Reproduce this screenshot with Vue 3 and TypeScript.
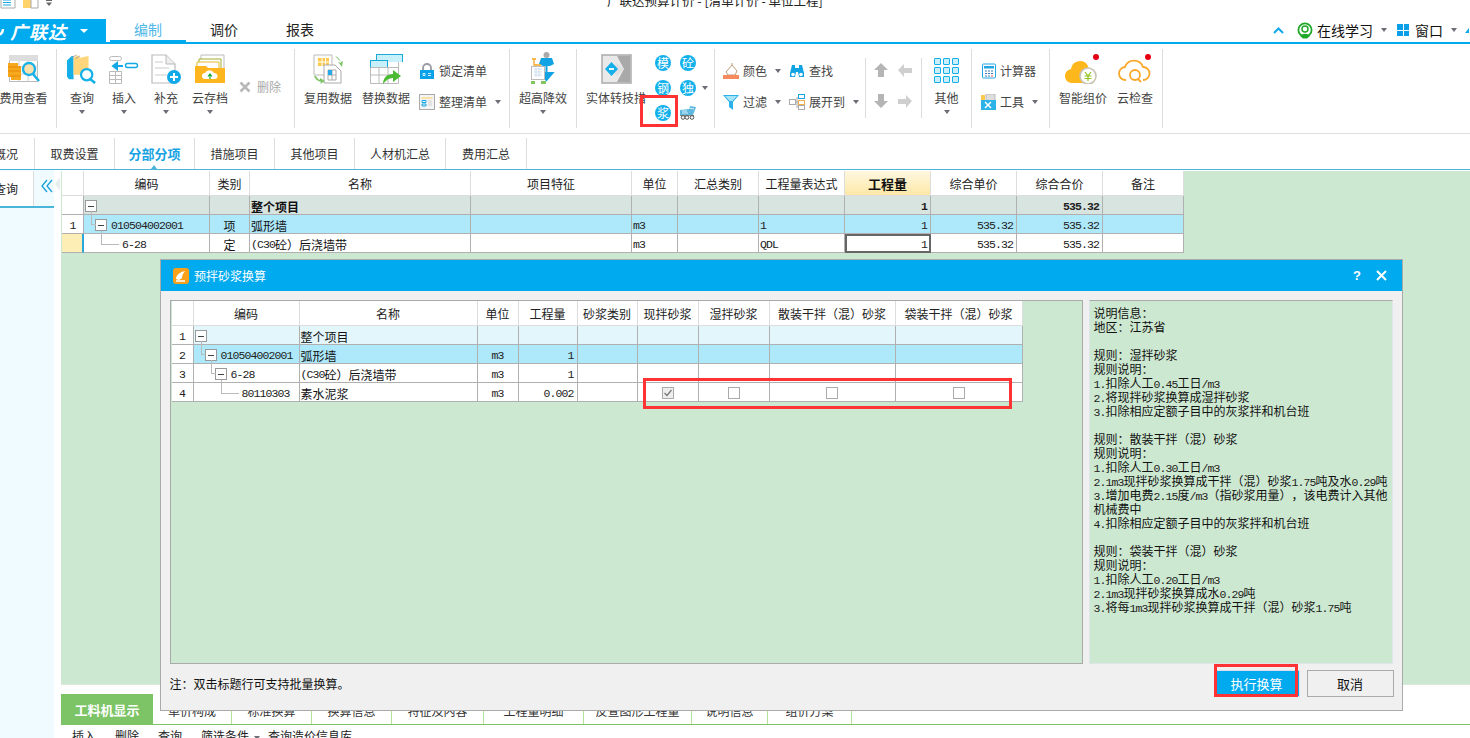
<script setup lang="ts">
interface Seg { x: string; l: boolean }
function segs(t: string): Seg[] {
  return t.split(/([\x20-\x7e]+)/).filter(Boolean).map((x) => ({ x, l: /^[\x20-\x7e]/.test(x) }))
}
const navTabs = [
  { t: '概况', w: 35, cls: 'first' },
  { t: '取费设置', w: 80 },
  { t: '分部分项', w: 80, cls: 'on' },
  { t: '措施项目', w: 80 },
  { t: '其他项目', w: 80 },
  { t: '人材机汇总', w: 91 },
  { t: '费用汇总', w: 81 },
]
const mainHead = ['', '编码', '类别', '名称', '项目特征', '单位', '汇总类别', '工程量表达式', '工程量', '综合单价', '综合合价', '备注']
const mainRows = [
  { n: '', cls: 'total', lv: 0, box: true, code: '', type: '', name: '整个项目', unit: '', expr: '', qty: '1', price: '', sum: '535.32' },
  { n: '1', cls: 'sel', lv: 1, box: true, code: '010504002001', type: '项', name: '弧形墙', unit: 'm3', expr: '1', qty: '1', price: '535.32', sum: '535.32' },
  { n: '', cls: 'cur', lv: 2, box: false, code: '6-28', type: '定', name: '(C30砼）后浇墙带', unit: 'm3', expr: 'QDL', qty: '1', price: '535.32', sum: '535.32' },
]
const dlgHead = ['', '编码', '名称', '单位', '工程量', '砂浆类别', '现拌砂浆', '湿拌砂浆', '散装干拌（混）砂浆', '袋装干拌（混）砂浆']
const dlgRows = [
  { n: '1', cls: 'pale', lv: 0, box: true, code: '', name: '整个项目', unit: '', qty: '', checks: false },
  { n: '2', cls: 'sel', lv: 1, box: true, code: '010504002001', name: '弧形墙', unit: 'm3', qty: '1', checks: false },
  { n: '3', cls: '', lv: 2, box: true, code: '6-28', name: '(C30砼）后浇墙带', unit: 'm3', qty: '1', checks: false },
  { n: '4', cls: '', lv: 3, box: false, code: '80110303', name: '素水泥浆', unit: 'm3', qty: '0.002', checks: true },
]
const info = [
  '说明信息：', '地区：江苏省', '',
  '规则：湿拌砂浆', '规则说明：', '1.扣除人工0.45工日/m3', '2.将现拌砂浆换算成湿拌砂浆', '3.扣除相应定额子目中的灰浆拌和机台班', '',
  '规则：散装干拌（混）砂浆', '规则说明：', '1.扣除人工0.30工日/m3', '2.1m3现拌砂浆换算成干拌（混）砂浆1.75吨及水0.29吨',
  '3.增加电费2.15度/m3（指砂浆用量），该电费计入其他', '机械费中', '4.扣除相应定额子目中的灰浆拌和机台班', '',
  '规则：袋装干拌（混）砂浆', '规则说明：', '1.扣除人工0.20工日/m3', '2.1m3现拌砂浆换算成水0.29吨', '3.将每1m3现拌砂浆换算成干拌（混）砂浆1.75吨',
]
const bottomTabs = [
  { t: '单价构成', w: 79 }, { t: '标准换算', w: 80 }, { t: '换算信息', w: 80 }, { t: '特征及内容', w: 92 },
  { t: '工程量明细', w: 100 }, { t: '反查图形工程量', w: 108 }, { t: '说明信息', w: 76 }, { t: '组价方案', w: 84 },
]
const grid9 = [0, 1, 2, 3, 4, 5, 6, 7, 8]
</script>

<template>
  <div class="app">
    <div class="titlebar">
      <div class="qa">
        <svg width="16" height="9" viewBox="0 0 16 9"><path d="M1-6h10l4 4v10H1z" fill="#fff" stroke="#aaa"/><path d="M3 0h8M3 2.5h8M3 5h8" stroke="#1ba6e4" stroke-width="1.2"/></svg>
        <svg class="qa2" width="16" height="9" viewBox="0 0 16 9"><rect x="0" y="-5" width="8" height="13" fill="#ffd36b"/><path d="M8-5h7V8H8z" fill="#fff" stroke="#aaa"/></svg>
        <svg class="qa3" width="6" height="7" viewBox="0 0 6 7"><path d="M0 0.5h6" stroke="#666"/><path d="M0 2.5h6L3 6z" fill="#666"/></svg>
      </div>
      <div class="title">广联达预算计价 - [清单计价 - 单位工程]</div>
    </div>

    <div class="menubar">
      <div class="brand">
        <svg width="8" height="23" viewBox="0 0 8 23"><path d="M-3 16c4 0 6-3 6-6" fill="none" stroke="#fff" stroke-width="2.5"/></svg>
        <span class="brand-t">广联达</span>
        <i class="tri white"></i>
      </div>
      <div class="mtab on">编制</div>
      <div class="mtab">调价</div>
      <div class="mtab">报表</div>
      <div class="mright">
        <svg width="11" height="7" viewBox="0 0 11 7"><path d="M1 6l4.5-4.5L10 6" fill="none" stroke="#12a8ee" stroke-width="2"/></svg>
        <svg class="r1" width="16" height="17" viewBox="0 0 16 17"><circle cx="8" cy="8" r="6.6" fill="none" stroke="#22a829" stroke-width="1.8"/><circle cx="8" cy="7" r="3" fill="none" stroke="#22a829" stroke-width="1.5"/><path d="M3 14c2-3 8-3 10 0l-3 2.5H6z" fill="#22a829"/></svg>
        <span class="r2">在线学习</span>
        <i class="tri r3"></i>
        <span class="winico r4"><b></b><b></b><b></b><b></b></span>
        <span class="r5">窗口</span>
        <i class="tri r6"></i>
        <svg class="r7" width="4" height="7" viewBox="0 0 4 7"><path d="M0 6L4 1v5z" fill="#12a8ee"/></svg>
      </div>
    </div>

    <div class="ribbon">
      <div class="grp" style="width:57px">
        <div class="big" style="width:47px">
          <svg class="ic" width="32" height="30" viewBox="0 0 32 30"><rect x="1.5" y="1.5" width="28" height="26" fill="#fff" stroke="#bbb"/><rect x="1" y="1" width="29" height="6" fill="#ddd"/><path d="M1 13h29M1 20h29M11 7v21M20 7v21" stroke="#ccc"/><path d="M0 9h10v3h3v14H3v-3H0z" fill="#f8a81c"/><path d="M0 13h13M0 17h13M2 22h11" stroke="#e58a05"/><circle cx="21" cy="15" r="6" fill="#fde1ae" stroke="#19b1e8" stroke-width="2.4"/><path d="M25 20l6 7" stroke="#19b1e8" stroke-width="2.6"/></svg>
          <span class="lb">费用查看</span>
        </div>
      </div>
      <div class="grp g2" style="width:238px">
        <div class="big" style="width:42px">
          <svg class="ic" width="32" height="32" viewBox="0 0 32 32"><path d="M0 7l5-5h2v25H2l-2-3z" fill="#14aee8"/><path d="M7 4l4-3 3 3 9-2v20H7z" fill="#ffd67c"/><path d="M5 4l5-3M9 5l5-3" stroke="#aaa"/><circle cx="21" cy="22" r="6" fill="#fff" stroke="#14b1e8" stroke-width="2.4"/><path d="M25 27l5 4" stroke="#14b1e8" stroke-width="2.8"/></svg>
          <span class="lb">查询</span><i class="tri"></i>
        </div>
        <div class="big" style="width:42px">
          <svg class="ic" width="30" height="30" viewBox="0 0 30 30"><rect x="0.5" y="2.5" width="12" height="4" rx="2" fill="#fff" stroke="#bbb"/><path d="M4 12h10M4 12l4-3v6z" stroke="#13a9e6" stroke-width="2" fill="#13a9e6"/><rect x="16.5" y="9.5" width="12" height="4" rx="2" fill="#fff" stroke="#13a9e6" stroke-width="1.4"/><path d="M0.5 17.5h12v12h-12zM0.5 21.5h12M0.5 25.5h12M6.5 17.5v12" fill="none" stroke="#bbb"/></svg>
          <span class="lb">插入</span><i class="tri"></i>
        </div>
        <div class="big" style="width:42px">
          <svg class="ic" width="31" height="30" viewBox="0 0 31 30"><path d="M1 1h14l9 9v19H1z" fill="#fff" stroke="#bbb" stroke-width="1.2"/><path d="M15 1v9h9" fill="#eee" stroke="#bbb"/><path d="M4 8h8M4 14h14M4 21h12" stroke="#ddd" stroke-width="1.4"/><circle cx="23" cy="23" r="7" fill="#12a9e8"/><path d="M23 19v8M19 23h8" stroke="#fff" stroke-width="2"/></svg>
          <span class="lb">补充</span><i class="tri"></i>
        </div>
        <div class="big" style="width:46px">
          <svg class="ic" width="30" height="30" viewBox="0 0 30 30"><path d="M6 1h23v16H6z" fill="#fff" stroke="#bbb"/><path d="M4 5h22v14H4z" fill="#fff" stroke="#9fb02e"/><path d="M2 8h22v12H2z" fill="#fff" stroke="#e6b92a"/><path d="M0 12h11l2 2h17v15H0z" fill="#ffb61e"/><path d="M10 25a3 3 0 0 1 0-6 5 5 0 0 1 9 0 3 3 0 0 1 1 6z" fill="#fff"/><path d="M15 25v-4M13 22.500l2-2.500 2 2.500" fill="none" stroke="#18a938" stroke-width="1.200"/></svg>
          <span class="lb">云存档</span><i class="tri"></i>
        </div>
        <div class="del">
          <svg width="12" height="12" viewBox="0 0 12 12"><path d="M1.500 1.500l9 9M10.500 1.500l-9 9" stroke="#b9b9b9" stroke-width="2.600"/></svg>
          <span>删除</span>
        </div>
      </div>
      <div class="grp g3" style="width:215px">
        <div class="big" style="width:58px">
          <svg class="ic" width="30" height="30" viewBox="0 0 30 30"><path d="M1 1h18v20H1z" fill="#fff" stroke="#bbb"/><rect x="5" y="4" width="11" height="8" fill="#ffc94d"/><path d="M5 8h11M9 4v8M12.500 4v8" stroke="#fff"/><path d="M11 11h11l6 6v12H11z" fill="#fff" stroke="#aaa"/><path d="M15 16h8v10h-8zM15 21h8M19 16v10" fill="none" stroke="#aaa"/><rect x="15" y="16" width="4" height="5" fill="#26a9e6"/><path d="M22 2c3 1 5 3 6 7l-3-1 4 5 1-6-2 1" fill="#7fc46a"/><path d="M1 22c1 3 3 5 7 6l-1 2 5-3-5-3v2c-2-1-3-2-4-4z" fill="#7fc46a"/></svg>
          <span class="lb">复用数据</span>
        </div>
        <div class="big" style="width:58px">
          <svg class="ic" width="33" height="30" viewBox="0 0 33 30"><rect x="6.500" y="0.500" width="26" height="24" fill="#c8f0fb" stroke="#1aa9d8"/><path d="M6 8h27v21H0V7" fill="#fff"/><rect x="0.500" y="6.500" width="17" height="7" fill="#c8f0fb" stroke="#1aa9d8"/><path d="M0.500 13.500h28v16h-28zM0.500 21h28M9 13.500v16M18 13.500v16M28.500 8v6" fill="none" stroke="#bbb"/><path d="M13 30c0-6 4-10 10-10v-4l8 6-8 6v-4c-4 0-7 2-10 6z" fill="#4cbb34"/></svg>
          <span class="lb">替换数据</span>
        </div>
        <div class="col">
          <div class="small"><svg class="si" width="16" height="16" viewBox="0 0 16 16"><path d="M4 8V5a4 4 0 0 1 8 0v3" fill="none" stroke="#9a9aa6" stroke-width="1.800"/><rect x="1" y="7" width="14" height="9" fill="#0aa2e8"/><path d="M4 10.500h2v2H4zM9 10.500h3M9 12.500h3" stroke="#fff" fill="none" stroke-width=".8"/></svg><span>锁定清单</span></div>
          <div class="small"><svg class="si" width="16" height="16" viewBox="0 0 16 16"><rect x=".5" y=".5" width="15" height="15" fill="#f4f4f4" stroke="#aaa"/><rect x="2.500" y="3" width="11" height="2" fill="#f9e1a8"/><path d="M3 6.500h4v2H3zM3 10h4v2H3z" fill="none" stroke="#16a8e6"/><path d="M9 7h4M9 9h4M9 11h4" stroke="#ddd" stroke-width="1.400"/></svg><span>整理清单</span><i class="tri aft"></i></div>
        </div>
      </div>
      <div class="grp" style="width:67px">
        <div class="big" style="width:66px">
          <svg class="ic tall" width="25" height="32" viewBox="0 0 25 32"><circle cx="15.500" cy="3" r="3" fill="#aaa"/><path d="M10 6h11l2 6-4 2h-7l-4-2z" fill="#12a3e4"/><path d="M15.500 12v8M15.500 28l-6-7h12z" fill="#12a3e4" stroke="#12a3e4" stroke-width="2"/><path d="M3 7v6h7M1 7h4" fill="none" stroke="#f5a623" stroke-width="1.300"/><rect x=".5" y="14.500" width="13" height="13" fill="#fff" stroke="#bbb"/><path d="M3 17h8M3 20h8M3 23h8M5 16v9M8 16v9" stroke="#cde"/><path d="M0 29h4v3H0zM10 29h5v3h-5z" fill="#84c45c"/></svg>
          <span class="lb">超高降效</span><i class="tri"></i>
        </div>
      </div>
      <div class="grp g5" style="width:138px">
        <div class="big" style="width:60px">
          <svg class="ic" width="31" height="30" viewBox="0 0 31 30"><rect x="1" y="1" width="29" height="28" fill="#e9e9e9" stroke="#aaa" stroke-width="1.500"/><path d="M16 2h13v26H16l7-13z" fill="#a9a9a9"/><path d="M10 15l6-6 7 6-7 7z" fill="#e0e0e0"/><path d="M10.500 8l6.500 7-6.500 7L4 15z" fill="#14aee8"/><path d="M8 15h5" stroke="#fff" stroke-width="1.800"/></svg>
          <span class="lb">实体转技措</span>
        </div>
        <div class="circs">
          <span class="circ">模</span><span class="circ">砼</span><span></span>
          <span class="circ">钢</span><span class="circ">独</span><i class="tri mid"></i>
          <span class="circ">浆</span>
          <svg width="16" height="14" viewBox="0 0 16 14"><path d="M0 4l9-1 1-3 6 1-1 3-2 5H0z" fill="#5fb9de"/><path d="M2 5h5M2 7h6M9 2l5 1" stroke="#d5eef8"/><path d="M0 9.500h14" stroke="#888"/><circle cx="3" cy="11.500" r="1.800" fill="#fff" stroke="#555"/><circle cx="7" cy="11.500" r="1.800" fill="#fff" stroke="#555"/><circle cx="12" cy="11.500" r="1.800" fill="#fff" stroke="#555"/></svg>
          <span></span>
        </div>
      </div>
      <div class="grp g6" style="width:150px">
        <div class="small"><svg class="si" width="16" height="16" viewBox="0 0 16 16"><path d="M3 9l6-7 5 6-2 4H5z" fill="#fff" stroke="#bb9c7a"/><path d="M9 2V0" stroke="#bb9c7a"/><rect x="0" y="12" width="16" height="4" fill="#f68a5c"/></svg><span>颜色</span><i class="tri aft"></i></div>
        <div class="small"><svg class="si" width="16" height="16" viewBox="0 0 16 16"><path d="M3 2h3v3h4V2h3l2 8v4h-5l-1-5H7l-1 5H1v-4z" fill="#12a3e4"/><circle cx="4" cy="11.500" r="1.800" fill="#fff"/><circle cx="12" cy="11.500" r="1.800" fill="#fff"/></svg><span>查找</span></div>
        <div class="small"><svg class="si" width="16" height="16" viewBox="0 0 16 16"><path d="M0 1h16L10 8v8L6 13V8z" fill="#2bb2ea"/><path d="M2 2h12L9.500 7h-3z" fill="#a6e2f8"/></svg><span>过滤</span><i class="tri aft"></i></div>
        <div class="small"><svg class="si" width="16" height="16" viewBox="0 0 16 16"><rect x=".5" y="5.500" width="6" height="5" fill="#fff" stroke="#aaa"/><rect x="9.500" y=".5" width="6" height="4" fill="#fff" stroke="#18a6e2"/><rect x="9.500" y="6.500" width="6" height="4" fill="#fff" stroke="#f0b14a"/><rect x="9.500" y="11.500" width="6" height="4" fill="#fff" stroke="#aaa"/><path d="M7 8h2M8 3v11" stroke="#aaa"/></svg><span>展开到</span><i class="tri aft"></i></div>
      </div>
      <i class="sep"></i>
      <div class="grp g7" style="width:55px">
        <svg width="16" height="16" viewBox="0 0 16 16"><path d="M8 1l7 7h-4v7H5V8H1z" fill="#b5b5b5"/></svg>
        <svg width="16" height="16" viewBox="0 0 16 16"><path d="M1 8l6-6v4h8v5H7v4z" fill="#cfcfcf"/></svg>
        <svg width="16" height="16" viewBox="0 0 16 16"><path d="M8 15L1 8h4V1h6v7h4z" fill="#b5b5b5"/></svg>
        <svg width="16" height="16" viewBox="0 0 16 16"><path d="M15 8L9 2v4H1v5h8v4z" fill="#cfcfcf"/></svg>
      </div>
      <i class="sep"></i>
      <div class="grp" style="width:50px">
        <div class="big" style="width:49px">
          <div class="ic g9"><i v-for="k in grid9" :key="k"></i></div>
          <span class="lb">其他</span><i class="tri"></i>
        </div>
      </div>
      <div class="grp g8" style="width:78px">
        <div class="col">
          <div class="small"><svg class="si" width="15" height="16" viewBox="0 0 15 16"><rect x="1.500" y="1" width="13" height="14" rx="1" fill="#fff" stroke="#22a6e4"/><rect x="3" y="3" width="10" height="2.500" fill="#22a6e4"/><path d="M4 8h2M7 8h2M10 8h2M4 10.500h2M7 10.500h2M10 10.500h2M4 13h2M7 13h2" stroke="#3a78b8"/><path d="M10 13h2" stroke="#e55"/></svg><span>计算器</span></div>
          <div class="small"><svg class="si" width="15" height="16" viewBox="0 0 15 16"><rect x="5" y="0" width="9" height="7" fill="#ddd" stroke="#bbb"/><path d="M0 1h4v5H0z" fill="#ffc94d"/><rect x="0" y="6" width="15" height="10" fill="#2db2e8"/><path d="M4 8l6 6M10 8l-6 6" stroke="#fff" stroke-width="1.500"/></svg><span>工具</span><i class="tri aft"></i></div>
        </div>
      </div>
      <div class="grp g10" style="width:113px">
        <div class="big" style="width:48px">
          <svg class="ic" width="36" height="30" viewBox="0 0 36 30"><path d="M8 29a7 7 0 0 1-2-14 9 9 0 0 1 17-3l3 17z" fill="#ffb81c"/><circle cx="23" cy="22" r="8" fill="#fff" stroke="#c9c3b4" stroke-width="1.600"/><path d="M20 18l3 4 3-4M19.500 22h7M19.500 24.500h7M23 22v5" fill="none" stroke="#8fc31f" stroke-width="1.200"/><circle cx="31" cy="3" r="3" fill="#e60012"/></svg>
          <span class="lb">智能组价</span>
        </div>
        <div class="big" style="width:48px">
          <svg class="ic" width="36" height="30" viewBox="0 0 36 30"><path d="M9 26a6.500 6.500 0 0 1-1-13 9.500 9.500 0 0 1 18 0 6.500 6.500 0 0 1 0 13" fill="none" stroke="#f9a72b" stroke-width="1.800"/><circle cx="18" cy="21" r="5" fill="#fff" stroke="#f9a72b" stroke-width="1.800"/><path d="M21 25l3 3" stroke="#f9a72b" stroke-width="1.800"/><circle cx="31" cy="3" r="3" fill="#e60012"/></svg>
          <span class="lb">云检查</span>
        </div>
      </div>
    </div>

    <div class="nav">
      <div v-for="t in navTabs" :key="t.t" class="ntab" :class="t.cls" :style="{ width: t.w + 'px' }">{{ t.t }}</div>
      <i class="notch"></i>
    </div>

    <div class="main">
      <aside class="side">
        <div class="side-top">
          <div class="side-tab">查询</div>
          <svg width="12" height="14" viewBox="0 0 12 14"><path d="M6 1L1 7l5 6M11 1L6 7l5 6" fill="none" stroke="#1a9fd8" stroke-width="1.300"/></svg>
        </div>
        <i class="side-notch"></i>
      </aside>
      <div class="content">
        <div class="area">
          <div class="mtable">
            <div class="mrow head">
              <div v-for="(h, i) in mainHead" :key="i" class="c" :class="{ hot: h === '工程量' }">{{ h }}</div>
            </div>
            <div v-for="r in mainRows" :key="r.code" class="mrow" :class="r.cls">
              <div class="c numc mono">{{ r.n }}</div>
              <div class="c tree lft" :style="{ paddingLeft: (r.box ? 1 + r.lv * 10 : r.lv * 10 - 3) + 'px' }">
                <span v-if="r.box" class="box" :class="{ linked: r.lv > 0 }"></span>
                <span v-else class="leaf"></span>
                <span class="mono code">{{ r.code }}</span>
              </div>
              <div class="c">{{ r.type }}</div>
              <div class="c lft nm"><span v-for="(s, i) in segs(r.name)" :key="i" :class="{ lat: s.l }">{{ s.x }}</span></div>
              <div class="c"></div>
              <div class="c lft mono pad2">{{ r.unit }}</div>
              <div class="c"></div>
              <div class="c lft mono pad2">{{ r.expr }}</div>
              <div class="c rgt mono" :class="{ focus: r.cls === 'cur' }">{{ r.qty }}</div>
              <div class="c rgt mono">{{ r.price }}</div>
              <div class="c rgt mono">{{ r.sum }}</div>
              <div class="c"></div>
            </div>
          </div>
        </div>
        <div class="btabs">
          <div class="btab on">工料机显示</div>
          <div v-for="t in bottomTabs" :key="t.t" class="btab" :style="{ width: t.w + 'px' }">{{ t.t }}</div>
        </div>
        <div class="btools">
          <span>插入</span><span>删除</span><span>查询</span><span class="tight">筛选条件<i class="tri inl"></i></span><span>查询造价信息库</span>
        </div>
      </div>
    </div>

    <section class="dialog">
      <header class="dhead">
        <svg width="16" height="16" viewBox="0 0 16 16"><rect width="16" height="16" rx="3" fill="#f9a11b"/><path d="M3 11c0-4 4-7 9-8-2 2-3 5-3 7l-3 2z" fill="#fff"/><path d="M3 13h9" stroke="#fff" stroke-width="1.500"/></svg>
        <span class="dtitle">预拌砂浆换算</span>
        <span class="dq">?</span>
        <svg class="dx" width="11" height="11" viewBox="0 0 11 11"><path d="M1 1l9 9M10 1l-9 9" stroke="#fff" stroke-width="2"/></svg>
      </header>
      <div class="dbody">
        <div class="dleft">
          <div class="drow head">
            <div v-for="(h, i) in dlgHead" :key="i" class="c">{{ h }}</div>
          </div>
          <div v-for="r in dlgRows" :key="r.n" class="drow" :class="r.cls">
            <div class="c numc mono">{{ r.n }}</div>
            <div class="c tree lft" :style="{ paddingLeft: (r.box ? 1 + r.lv * 10 : r.lv * 10 - 3) + 'px' }">
              <span v-if="r.box" class="box" :class="{ linked: r.lv > 0 }"></span>
              <span v-else class="leaf"></span>
              <span class="mono code">{{ r.code }}</span>
            </div>
            <div class="c lft nm"><span v-for="(s, i) in segs(r.name)" :key="i" :class="{ lat: s.l }">{{ s.x }}</span></div>
            <div class="c mono">{{ r.unit }}</div>
            <div class="c rgt mono">{{ r.qty }}</div>
            <div class="c"></div>
            <div class="c"><span v-if="r.checks" class="cb checked"><svg width="10" height="10" viewBox="0 0 10 10"><path d="M1.500 5l2.500 2.500L8.500 2" fill="none" stroke="#777" stroke-width="1.200"/></svg></span></div>
            <div class="c"><span v-if="r.checks" class="cb"></span></div>
            <div class="c"><span v-if="r.checks" class="cb"></span></div>
            <div class="c"><span v-if="r.checks" class="cb"></span></div>
          </div>
        </div>
        <div class="dright">
          <div v-for="(l, i) in info" :key="i" class="iline"><span v-for="(s, j) in segs(l)" :key="j" :class="{ lat: s.l }">{{ s.x }}</span></div>
        </div>
      </div>
      <footer class="dfoot">
        <div class="note">注：双击标题行可支持批量换算。</div>
        <button class="btn primary">执行换算</button>
        <button class="btn">取消</button>
      </footer>
    </section>

    <i class="mark m1"></i>
    <i class="mark m2"></i>
    <i class="mark m3"></i>
  </div>
</template>

<style scoped>
.app { position: relative; width: 1470px; height: 738px; overflow: hidden; background: #fff; color: #222; font: 12px/14px "Noto Sans CJK SC", "Liberation Sans", sans-serif; text-spacing-trim: space-all; }
i { display: block; font-style: normal; }
.tri { width: 0; height: 0; flex: none; border-left: 3.5px solid transparent; border-right: 3.5px solid transparent; border-top: 4px solid #6d6d78; }
.tri.white { border-top-color: #fff; border-left-width: 4px; border-right-width: 4px; margin-left: 13px; }

.titlebar { height: 18px; display: flex; overflow: hidden; }
.qa { display: flex; align-items: flex-start; width: 52px; }
.qa2 { margin-left: 7px; }
.qa3 { margin-left: 7px; }
.title { margin: -6px 0 0 555px; font-size: 12.500px; line-height: 14px; color: #222; white-space: nowrap; }

.menubar { height: 26px; box-sizing: border-box; display: flex; border-bottom: 2px solid #00aaef; }
.brand { width: 106px; height: 23px; margin: 1px 4px 0 0; background: #00aaef; display: flex; align-items: center; color: #fff; }
.brand-t { margin-left: 2px; font-size: 18px; font-weight: 700; font-style: italic; letter-spacing: 1px; }
.mtab { width: 76px; box-sizing: border-box; height: 24px; text-align: center; font-size: 14px; line-height: 23px; color: #222; border-bottom: 2px solid transparent; }
.mtab.on { color: #4fb7e8; border-bottom-color: #00aaef; }
.mright { margin-left: auto; width: 197px; display: flex; align-items: center; font-size: 14px; color: #111; flex: none; }
.mright > * { flex: none; }
.r1 { margin-left: 13px; }
.r2 { margin-left: 4px; }
.r3 { margin-left: 8px; }
.r4 { margin-left: 10px; }
.r5 { margin-left: 6px; }
.r6 { margin-left: 8px; }
.r7 { margin-left: 8px; }
.winico { width: 12px; height: 12px; display: grid; grid-template-columns: 5.500px 5.500px; grid-template-rows: 5.500px 5.500px; gap: 1px; }
.winico b { background: #0a9fe8; }

.ribbon { height: 90px; box-sizing: border-box; padding-top: 5px; border-bottom: 1px solid #ddd; display: flex; align-items: flex-start; color: #444; }
.grp { height: 79px; box-sizing: border-box; border-right: 1px solid #ddd; display: flex; flex: none; }
.big { display: flex; flex-direction: column; align-items: center; padding-top: 5px; flex: none; }
.ic { height: 30px; flex: none; margin-bottom: 7px; }
.ic.tall { height: 32px; margin: -2px 0 7px; }
.lb { line-height: 14px; white-space: nowrap; }
.big .tri { margin-top: 5px; }
.g2 { padding-left: 4px; }
.del { display: flex; align-items: center; gap: 6px; color: #aaa; height: 14px; margin: 31px 0 0 6px; white-space: nowrap; }
.g3 { padding-left: 4px; }
.col { display: flex; flex-direction: column; gap: 15px; padding-top: 14px; }
.small { display: flex; align-items: center; height: 16px; white-space: nowrap; }
.si { margin-right: 4px; flex: none; }
.tri.aft { margin-left: 8px; }
.g3 .col { margin-left: 4px; }
.g5 { padding-left: 9px; }
.circs { margin: 6px 0 0 9px; display: grid; grid-template-columns: 16px 16px 8px; grid-auto-rows: 16px; gap: 9px 9px; align-items: center; }
.circ { width: 16px; height: 16px; border-radius: 50%; background: #14b1ea; color: #fff; font-size: 12px; line-height: 16px; text-align: center; }
.tri.mid { margin-left: -3px; }
.g6 { border: 0; padding: 14px 0 0 8px; display: grid; grid-template-columns: 66px 76px; grid-auto-rows: 16px; gap: 15px 0; }
.sep { width: 1px; height: 60px; background: #ddd; margin-top: 9px; flex: none; }
.g7 { border: 0; padding: 13px 0 0 7px; display: grid; grid-template-columns: 16px 16px; grid-auto-rows: 16px; gap: 15px 8px; }
.g9 { width: 25px; height: 24px; margin: 4px 0 9px; display: grid; grid-template-columns: repeat(3, 7px); grid-auto-rows: 7px; gap: 2px; }
.g9 i { background: #c8effb; border: 1.500px solid #14aee8; box-sizing: border-box; border-radius: 1px; }
.g8 { padding-left: 9px; }
.g10 { padding-left: 9px; gap: 4px; }

.nav { position: relative; height: 36px; box-sizing: border-box; border-bottom: 1px solid #4ab4d9; display: flex; }
.ntab { box-sizing: border-box; margin-top: 4px; border-right: 1px solid #ddd; text-align: center; line-height: 31px; flex: none; white-space: nowrap; color: #333; }
.ntab.first { text-align: right; padding-right: 16px; direction: rtl; }
.ntab.on { color: #17a3e2; font-weight: 700; font-size: 13px; }
.notch { position: absolute; left: 151px; bottom: 0; width: 0; height: 0; border-left: 3.500px solid transparent; border-right: 3.500px solid transparent; border-bottom: 4px solid #4ab4d9; }

.main { height: 568px; display: flex; }
.side { position: relative; width: 54px; flex: none; background: #f0fbff; border-right: 1px solid #fff; }
.side-top { height: 35px; margin-top: 1px; border-bottom: 2px solid #4ab4d9; display: flex; align-items: flex-start; }
.side-top svg { margin: 8px 0 0 7px; }
.side-tab { width: 34px; height: 35px; box-sizing: border-box; background: #fff; border-right: 1px solid #ddd; line-height: 36px; text-align: right; padding-right: 15px; white-space: nowrap; direction: rtl; color: #222; }
.side-notch { position: absolute; left: 55px; top: 7px; width: 0; height: 0; border-top: 7px solid transparent; border-bottom: 7px solid transparent; border-right: 5px solid #e6eeee; }
.content { margin-left: 6px; flex: 1; display: flex; flex-direction: column; min-width: 0; }
.area { flex: 1; margin: 1px 0 9px; padding-left: 1px; background: #cde8d0; border-bottom: 1px solid #dbe8dc; min-height: 0; }
.mtable { width: 1122px; }

.mrow, .drow { display: grid; }
.mrow { grid-template-columns: 22px 126px 40px 221px 161px 46px 81px 86px 86px 86px 86px 81px; height: 19px; }
.drow { grid-template-columns: 22px 106px 178px 41px 59px 60px 61px 71px 126px 127px; height: 19px; width: 851px; margin-left: 1px; background: #fff; }
.head { height: 25px; background: #fff; }
.c { box-sizing: border-box; border-right: 1px solid #b0b0b0; border-bottom: 1px solid #b0b0b0; display: flex; align-items: center; justify-content: center; white-space: nowrap; overflow: visible; background: inherit; position: relative; color: #111; min-width: 0; padding-top: 3px; }
.head .c { border-color: #dcdcdc; color: #222; padding: 1px 0 0 0; }
.mrow.total { background: #d8e4df; font-weight: 700; }
.mrow.sel, .drow.sel { background: #ade8fb; }
.mrow.cur { background: #fff; }
.drow.pale { background: #e3f6fb; }
.numc { background: #fff; }
.mrow.cur .numc { background: #fdeeb5; border-right: 2px solid #2ca7dc; }
.c.hot { background: linear-gradient(#fff8e0, #fde8a8); font-weight: 700; font-size: 13px; color: #111; }
.c.focus { outline: 2px solid #666; outline-offset: -2px; z-index: 1; }
.lft { justify-content: flex-start; }
.rgt { justify-content: flex-end; padding-right: 3px; }
.nm { padding-left: 1px; }
.pad2 { padding-left: 1px; }
.mono, .lat { font-family: "Liberation Mono", monospace; font-size: 11.500px; letter-spacing: -.900px; color: #222; }
.tree { overflow: visible; }
.box { position: relative; width: 12px; height: 12px; margin-top: -1px; box-sizing: border-box; border: 1px solid #999; background: #fff; margin-right: 4px; flex: none; }
.box::after { content: ""; position: absolute; left: 2px; right: 2px; top: 4.500px; height: 1px; background: #444; }
.box.linked::before { content: ""; position: absolute; left: -5px; top: -9px; width: 4px; height: 13px; border-left: 1px solid #bbb; border-bottom: 1px solid #bbb; }
.leaf { position: relative; width: 18px; margin-right: 3px; height: 1px; flex: none; }
.leaf::before { content: ""; position: absolute; left: 0; bottom: 0; width: 17px; height: 13px; border-left: 1px solid #bbb; border-bottom: 1px solid #bbb; }

.btabs { height: 31px; flex: none; box-sizing: border-box; border-bottom: 1px solid #7cc466; display: flex; }
.btab { box-sizing: border-box; border-right: 1px solid #b4e39a; text-align: center; line-height: 34px; flex: none; white-space: nowrap; color: #333; }
.btab.on { width: 92px; background: #7cc466; color: #fff; font-weight: 700; font-size: 13px; line-height: 32px; border: 0; }
.btools { height: 13px; overflow: hidden; display: flex; padding-left: 11px; line-height: 22px; color: #222; white-space: nowrap; }
.btools span { margin-right: 19px; display: flex; align-items: flex-start; height: 22px; }
.btools span.tight { margin-right: 8px; }
.tri.inl { margin: 11px 0 0 5px; }

.dialog { position: absolute; left: 160px; top: 259px; width: 1243px; height: 452px; box-sizing: border-box; border: 1px solid #aaa; border-width: 1px 1.500px 1.500px 1.500px; background: #f0f0f0; display: flex; flex-direction: column; z-index: 2; }
.dhead { height: 31px; flex: none; background: #00aaef; color: #fff; display: flex; align-items: center; padding-left: 12px; }
.dtitle { margin-left: 5px; }
.dq { margin-left: auto; font: 700 13px "Liberation Sans", sans-serif; }
.dx { margin: 0 15px 0 15px; }
.dbody { flex: none; display: flex; gap: 6px; padding: 9px 0 0 8.500px; height: 373px; box-sizing: border-box; }
.dleft { width: 913px; height: 364px; box-sizing: border-box; background: #cde8d0; border: 1px solid #aaa; flex: none; }
.dleft .drow:first-child { height: 25px; }
.dright { width: 304px; height: 364px; box-sizing: border-box; background: #cde8d0; border: 1px solid #dfe6ea; border-top-color: #aaa; padding: 5px 0 0 4px; flex: none; }
.iline { height: 14px; white-space: nowrap; color: #111; }
.cb { width: 12px; height: 12px; margin-top: -1px; box-sizing: border-box; border: 1px solid #aaa; background: #fff; display: flex; align-items: center; justify-content: center; }
.cb.checked { background: #eee; }
.dfoot { flex: 1; display: flex; align-items: flex-start; padding: 6px 8.500px 0 8.500px; }
.note { margin-right: auto; line-height: 27px; padding-top: 0; color: #111; }
.btn { width: 87px; height: 27px; margin: 0; padding: 0; box-sizing: border-box; border: 1.500px solid #aaa; background: #f0f0f0; color: #111; font: 13px "Noto Sans CJK SC", sans-serif; }
.btn.primary { width: 86px; margin-right: 7px; background: #00aaef; border: 1px solid #dde; color: #fff; }

.mark { position: absolute; box-sizing: border-box; border: 3px solid #f33; z-index: 3; }
.m1 { left: 640px; top: 95px; width: 38px; height: 32px; }
.m2 { left: 643px; top: 378px; width: 369px; height: 31px; }
.m3 { left: 1214px; top: 664px; width: 84px; height: 33px; }
</style>
